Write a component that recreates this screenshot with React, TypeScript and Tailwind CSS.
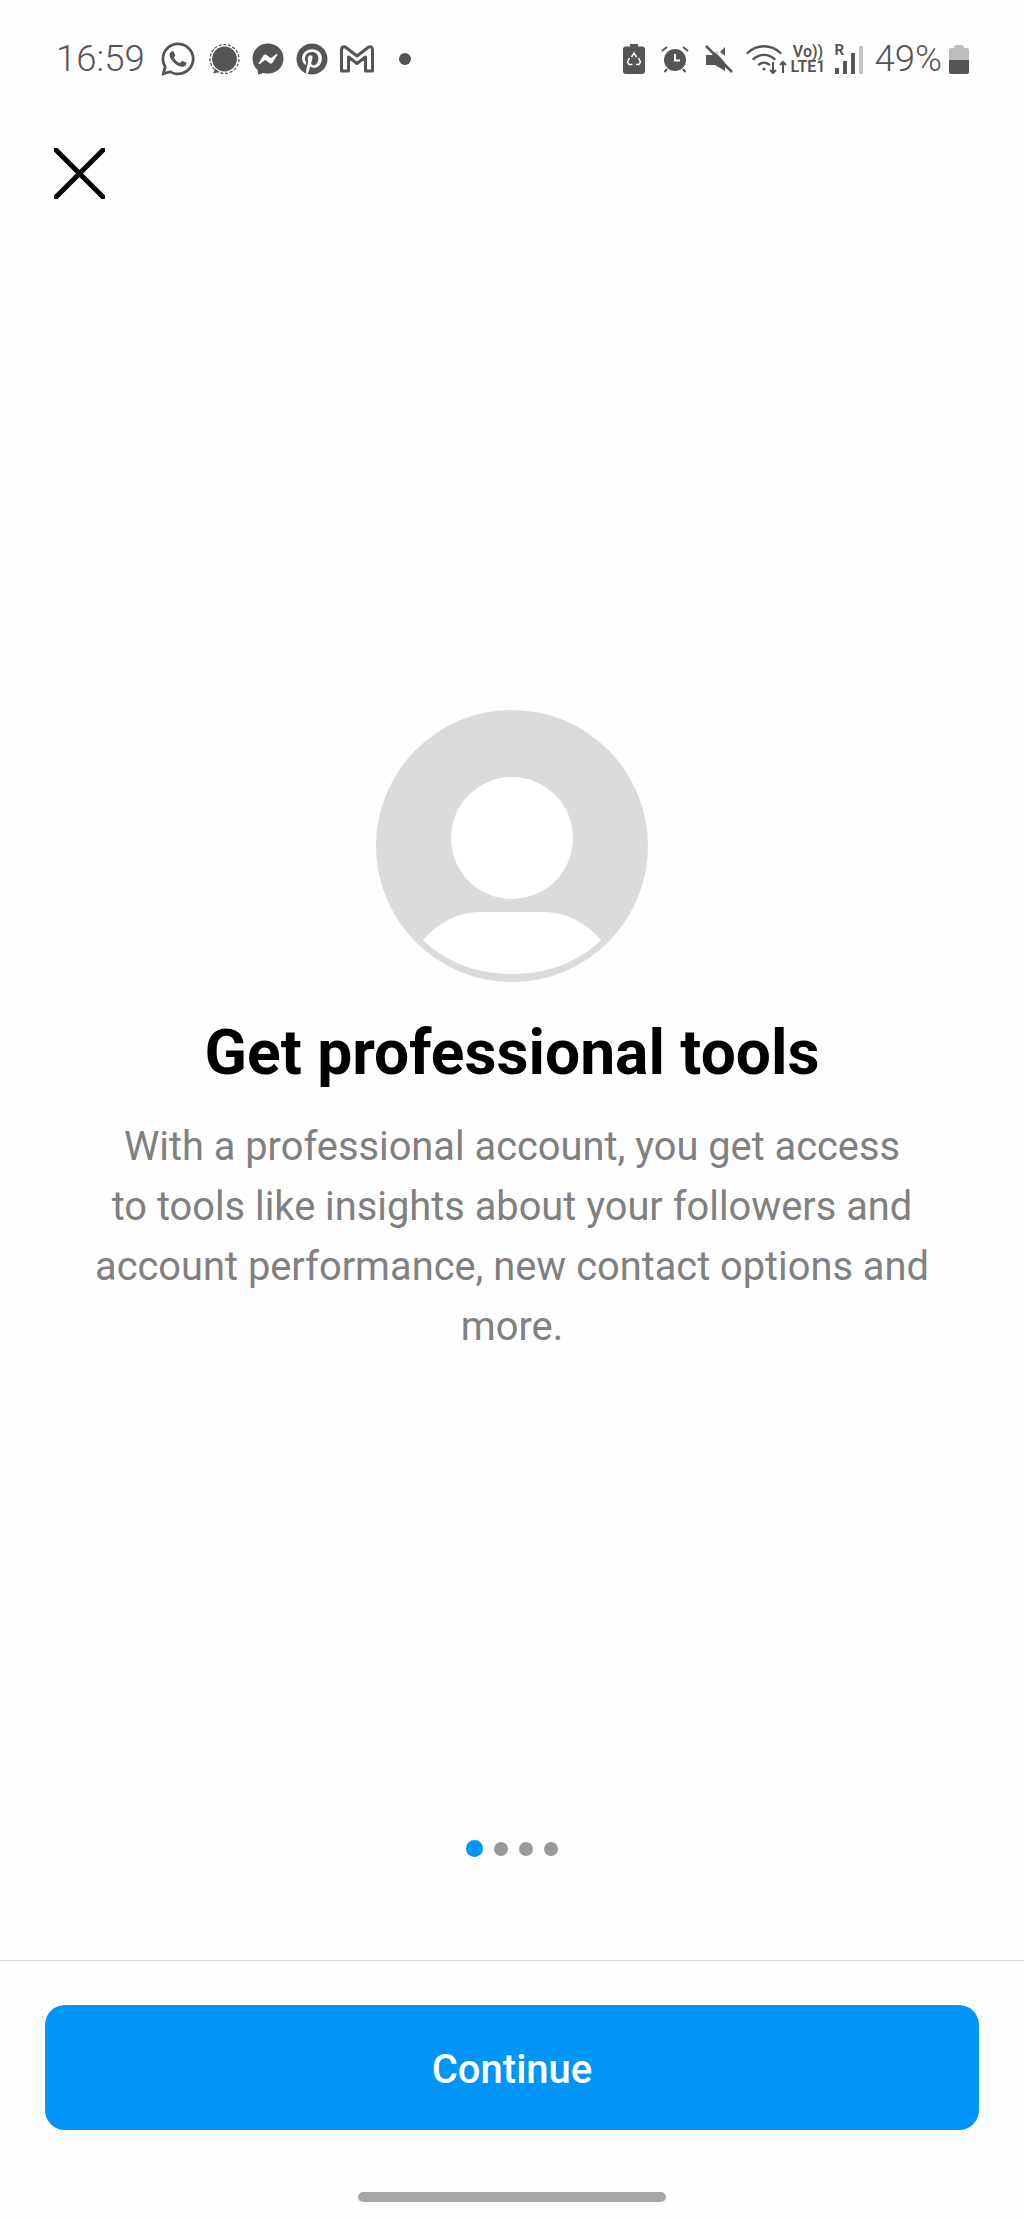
import React from 'react';
import { FaWhatsapp, FaFacebookMessenger, FaPinterest } from 'react-icons/fa';

function SignalIcon() {
  return (
    <svg viewBox="0 0 30 30" className="h-[31px] w-[31px]">
      <circle cx="15" cy="14.5" r="12" fill="#555" />
      <path d="M6 24l-2 4.5 6-1.5z" fill="#555" />
      <circle cx="15" cy="14.5" r="14" fill="none" stroke="#555" strokeWidth="1.2" strokeDasharray="3 1.6" />
    </svg>
  );
}

function GmailIcon() {
  return (
    <svg viewBox="0 0 34 28" className="h-[28px] w-[34px]" fill="none" stroke="#555" strokeWidth="3" strokeLinejoin="round">
      <path d="M1.5 4.5C1.5 2 4 1 6 2.500L17 11 28 2.500C30 1 32.500 2 32.500 4.500V26H25.500V12L17 18.500 8.500 12V26H1.500Z" />
    </svg>
  );
}

function BatterySaverIcon() {
  return (
    <svg viewBox="0 0 22 30" className="h-[30px] w-[22px]">
      <path d="M7 0h8v2.500h4a3 3 0 0 1 3 3V27a3 3 0 0 1-3 3H3a3 3 0 0 1-3-3V5.500a3 3 0 0 1 3-3h4z" fill="#555" />
      <path d="M8.500 13l2.500-4 2.500 4M15.500 14l2 4-1.500 2.500h-3M9.500 20.500H6L4.500 18l2-4" fill="none" stroke="#fff" strokeWidth="1.500" />
    </svg>
  );
}

function AlarmIcon() {
  return (
    <svg viewBox="0 0 28 28" className="h-[28px] w-[28px]">
      <circle cx="14" cy="15" r="11" fill="#555" />
      <path d="M14 9v6.500h5" fill="none" stroke="#fff" strokeWidth="2" />
      <path d="M1 6l5-4M27 6l-5-4M6 24l-2.500 3M22 24l2.500 3" stroke="#555" strokeWidth="2" />
    </svg>
  );
}

function MuteIcon() {
  return (
    <svg viewBox="0 0 28 28" className="h-[28px] w-[28px]">
      <path d="M1 10h6l5-4 8 12v8L10 20H1z" fill="#555" />
      <path d="M15 7l5-5v9z" fill="#555" />
      <path d="M1 1l26 26" stroke="#555" strokeWidth="2.500" />
      <path d="M4 0l25 25" stroke="#fff" strokeWidth="1.500" />
    </svg>
  );
}

function WifiIcon() {
  return (
    <svg viewBox="0 0 42 32" className="h-[32px] w-[42px]" fill="none" stroke="#555" strokeWidth="2.400" strokeLinecap="round">
      <path d="M1.500 10C11 1 25 1 34.500 10" />
      <path d="M7.500 16C14 10.500 22 10.500 28.500 16" />
      <path d="M13 21.500c3-2.500 7-2.500 10 0" />
      <circle cx="18" cy="26" r="1.500" fill="#555" stroke="none" />
      <path d="M27 19v11M24 27l3 3 3-3M37 30V19M34 22l3-3 3 3" strokeWidth="2" strokeLinecap="butt" />
    </svg>
  );
}

function SignalBars() {
  return (
    <div className="relative flex h-[30px] w-[28px] items-end gap-[4px]">
      <span className="absolute left-0 top-[-3px] text-[15px] font-bold leading-[18px] text-[#555]">R</span>
      <div className="h-[6px] w-[4px] bg-[#555]" />
      <div className="h-[13px] w-[4px] bg-[#555]" />
      <div className="h-[21px] w-[4px] bg-[#555]" />
      <div className="h-[28px] w-[4px] bg-[#c4c4c4]" />
    </div>
  );
}

function BatteryIcon() {
  return (
    <div className="flex h-[29px] w-[20px] flex-col items-center">
      <div className="h-[3px] w-[10px] rounded-t-sm bg-[#bdbdbd]" />
      <div className="h-[12px] w-full rounded-t-[2px] bg-[#bdbdbd]" />
      <div className="h-[14px] w-full rounded-b-[2px] bg-[#555]" />
    </div>
  );
}

function StatusBar() {
  return (
    <div className="flex h-[58px] items-center justify-between pl-[56px] pr-[55px] text-[#555]">
      <div className="flex items-center">
        <span className="w-[103px] text-[36.500px] font-light leading-none">16:59</span>
        <div className="flex items-center gap-[12px]">
          <FaWhatsapp className="h-[38px] w-[38px]" />
          <SignalIcon />
          <FaFacebookMessenger className="h-[32px] w-[32px]" />
          <FaPinterest className="h-[32px] w-[32px]" />
          <GmailIcon />
          <div className="ml-[13px] h-[12px] w-[12px] rounded-full bg-[#555]" />
        </div>
      </div>
      <div className="flex items-center">
        <BatterySaverIcon />
        <div className="ml-[16px]"><AlarmIcon /></div>
        <div className="ml-[16px]"><MuteIcon /></div>
        <div className="ml-[13px]"><WifiIcon /></div>
        <div className="ml-[2px] flex w-[37px] flex-col items-center text-[16px] font-semibold leading-[15px]">
          <span>Vo))</span>
          <span>LTE1</span>
        </div>
        <div className="ml-[8px]"><SignalBars /></div>
        <span className="ml-[12px] text-[36.500px] font-light leading-none">49%</span>
        <div className="ml-[7px]"><BatteryIcon /></div>
      </div>
    </div>
  );
}

function Avatar() {
  return (
    <svg viewBox="0 0 272 272" className="h-[272px] w-[272px]">
      <circle cx="136" cy="136" r="136" fill="#dbdbdb" />
      <circle cx="136" cy="128" r="61" fill="#fff" />
      <path d="M47 230C62 213 80 203 102 202H170C192 203 210 213 225 230C202 253 170 264 136 264C102 264 70 253 47 230Z" fill="#fff" />
    </svg>
  );
}

export default function App() {
  return (
    <div className="flex h-[2219px] w-[1024px] flex-col overflow-hidden bg-[#fefefe] font-['Roboto',sans-serif]">
      <div className="pt-[30px]">
        <StatusBar />
      </div>

      <div className="pl-[54px] pt-[60px]">
        <svg viewBox="0 0 51 51" className="h-[51px] w-[51px]" fill="none" stroke="#000" strokeWidth="5" strokeLinecap="round">
          <path d="M2 2l47 47M49 2L2 49" />
        </svg>
      </div>

      <div className="flex flex-col items-center pt-[511px]">
        <Avatar />
        <h1 className="mt-[36px] text-[62.300px] font-bold leading-[70px] text-black">Get professional tools</h1>
        <p className="mt-[29px] w-[860px] text-center text-[39.800px] leading-[60px] text-[#808080]">
          With a professional account, you get access
          <br />
          to tools like insights about your followers and
          <br />
          account performance, new contact options and
          <br />
          more.
        </p>
      </div>

      <div className="mt-auto flex flex-col">
        <div className="flex justify-center gap-[11px] pb-[103px]">
          <div className="h-[17px] w-[17px] rounded-full bg-[#0095f6]" />
          <div className="h-[14px] w-[14px] self-center rounded-full bg-[#999]" />
          <div className="h-[14px] w-[14px] self-center rounded-full bg-[#999]" />
          <div className="h-[14px] w-[14px] self-center rounded-full bg-[#999]" />
        </div>
        <div className="border-t border-[#dbdbdb] px-[45px] pt-[44px]">
          <button className="flex h-[125px] w-full items-center justify-center rounded-[20px] bg-[#0095f6] pt-[4px] text-[40px] font-medium text-white">
            Continue
          </button>
        </div>
        <div className="flex justify-center pb-[17px] pt-[62px]">
          <div className="h-[10px] w-[308px] rounded-full bg-[#a8a8a8]" />
        </div>
      </div>
    </div>
  );
}
